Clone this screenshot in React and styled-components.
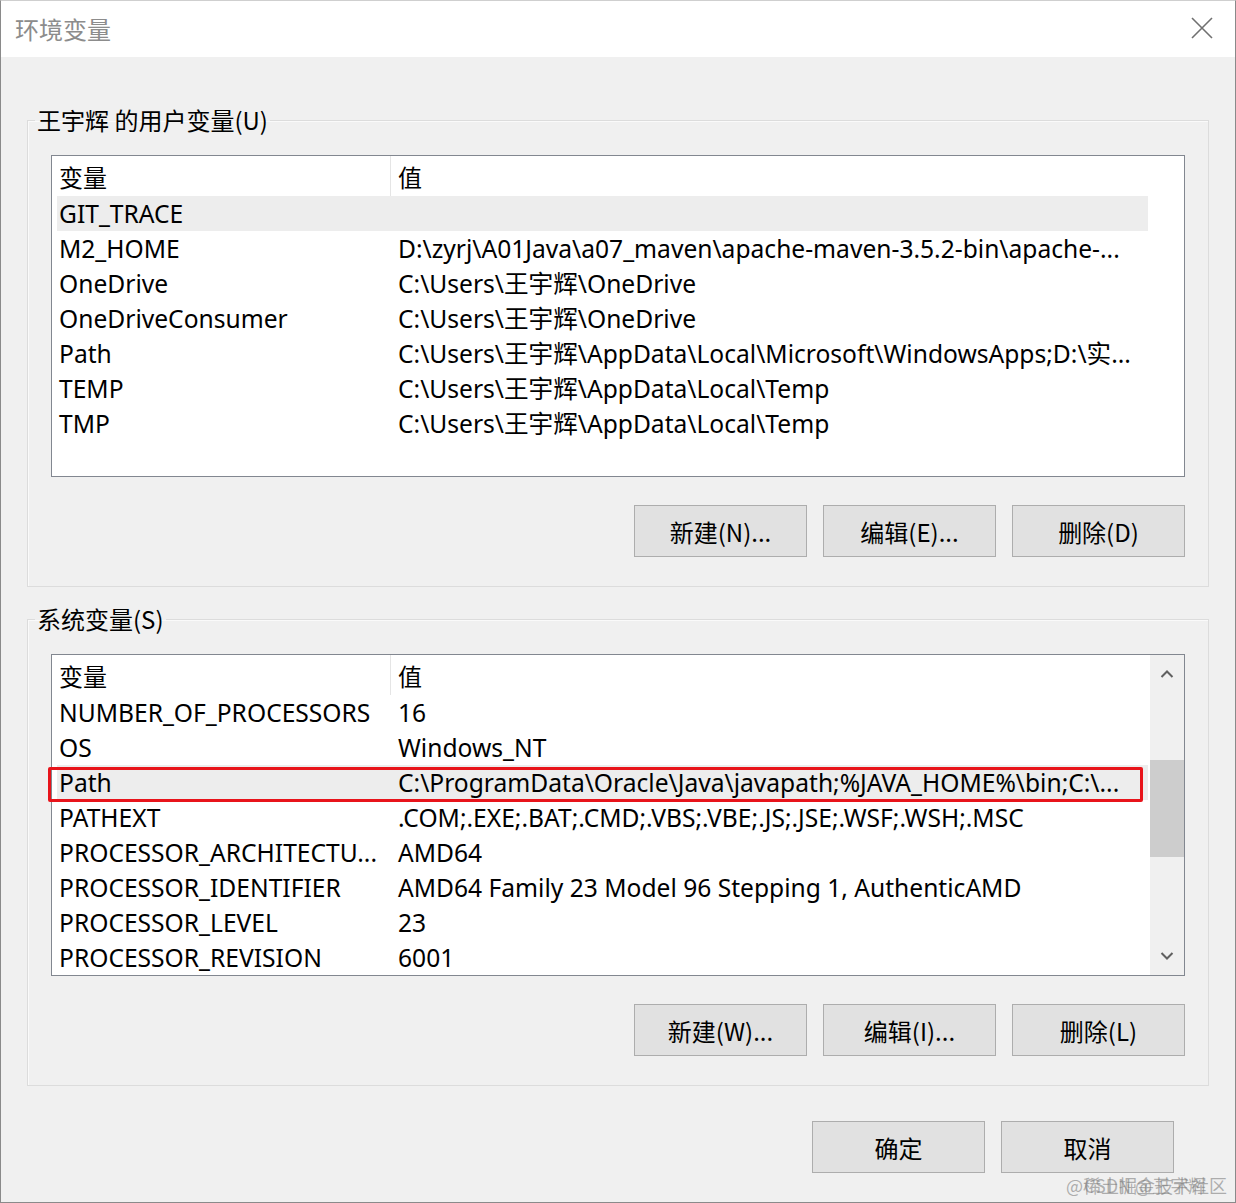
import React from 'react'
import styled, { createGlobalStyle, css } from 'styled-components'

const GlobalStyle = createGlobalStyle`
  html, body {
    margin: 0;
    padding: 0;
    background: #ffffff;
  }
  body {
    font-family: "Noto Sans", "Noto Sans CJK SC", sans-serif;
    color: #000;
  }
`

const userVars = [
  ['GIT_TRACE', '', true],
  ['M2_HOME', 'D:\\zyrj\\A01Java\\a07_maven\\apache-maven-3.5.2-bin\\apache-...'],
  ['OneDrive', 'C:\\Users\\王宇辉\\OneDrive'],
  ['OneDriveConsumer', 'C:\\Users\\王宇辉\\OneDrive'],
  ['Path', 'C:\\Users\\王宇辉\\AppData\\Local\\Microsoft\\WindowsApps;D:\\实...'],
  ['TEMP', 'C:\\Users\\王宇辉\\AppData\\Local\\Temp'],
  ['TMP', 'C:\\Users\\王宇辉\\AppData\\Local\\Temp'],
]

const sysVars = [
  ['NUMBER_OF_PROCESSORS', '16'],
  ['OS', 'Windows_NT'],
  ['Path', 'C:\\ProgramData\\Oracle\\Java\\javapath;%JAVA_HOME%\\bin;C:\\...', true, true],
  ['PATHEXT', '.COM;.EXE;.BAT;.CMD;.VBS;.VBE;.JS;.JSE;.WSF;.WSH;.MSC'],
  ['PROCESSOR_ARCHITECTU...', 'AMD64'],
  ['PROCESSOR_IDENTIFIER', 'AMD64 Family 23 Model 96 Stepping 1, AuthenticAMD'],
  ['PROCESSOR_LEVEL', '23'],
  ['PROCESSOR_REVISION', '6001'],
]

function VarList({ rows, hasScrollbar }) {
  return (
    <ListBox>
      <ListBody>
        <HeaderRow>
          <NameCell $header>变量</NameCell>
          <ValueCell>值</ValueCell>
        </HeaderRow>
        {rows.map(([name, value, selected, marked]) => (
          <Row key={name} $selected={selected} $marked={marked}>
            <NameCell>{name}</NameCell>
            <ValueCell>{value}</ValueCell>
          </Row>
        ))}
      </ListBody>
      {hasScrollbar && (
        <Scrollbar>
          <ArrowBtn>
            <svg width="14" height="10" viewBox="0 0 14 10">
              <path d="M1.5 8 L7 2.5 L12.5 8" fill="none" stroke="#606060" strokeWidth="2" />
            </svg>
          </ArrowBtn>
          <Track>
            <Thumb />
          </Track>
          <ArrowBtn>
            <svg width="14" height="10" viewBox="0 0 14 10">
              <path d="M1.5 2 L7 7.5 L12.5 2" fill="none" stroke="#606060" strokeWidth="2" />
            </svg>
          </ArrowBtn>
        </Scrollbar>
      )}
    </ListBox>
  )
}

export default function App() {
  return (
    <Window>
      <GlobalStyle />
      <TitleBar>
        <Title>环境变量</Title>
        <CloseBtn aria-label='close'>
          <svg width="22" height="22" viewBox="0 0 22 22">
            <path d="M1 1 L21 21 M21 1 L1 21" stroke="#707070" strokeWidth="1.6" />
          </svg>
        </CloseBtn>
      </TitleBar>
      <Body>
        <Group $first>
          <Legend>王宇辉 的用户变量(U)</Legend>
          <GroupInner>
            <VarList rows={userVars} />
            <ButtonRow>
              <Button>新建(N)...</Button>
              <Button>编辑(E)...</Button>
              <Button>删除(D)</Button>
            </ButtonRow>
          </GroupInner>
        </Group>
        <Group>
          <Legend>系统变量(S)</Legend>
          <GroupInner>
            <VarList rows={sysVars} hasScrollbar />
            <ButtonRow>
              <Button>新建(W)...</Button>
              <Button>编辑(I)...</Button>
              <Button>删除(L)</Button>
            </ButtonRow>
          </GroupInner>
        </Group>
        <Footer>
          <Button>确定</Button>
          <Button>取消</Button>
        </Footer>
      </Body>
      <Watermark>
        <span>@稀土掘金技术社区</span>
        <span className='over'>CSDN @王宇辉</span>
      </Watermark>
    </Window>
  )
}

const Window = styled.div`
  position: relative;
  box-sizing: border-box;
  width: 1236px;
  height: 1203px;
  border: 1px solid #8a8a8a;
  border-top-color: #cfcfcf;
  background: #f0f0f0;
  display: flex;
  flex-direction: column;
  overflow: hidden;
`

const TitleBar = styled.div`
  height: 56px;
  background: #ffffff;
  display: flex;
  align-items: center;
  justify-content: space-between;
  padding: 0 22px 0 14px;
`

const Title = styled.div`
  font-size: 24px;
  color: #8c8c8c;
  font-family: "Noto Sans CJK SC", sans-serif;
  padding-bottom: 2px;
`

const CloseBtn = styled.div`
  width: 22px;
  height: 22px;
  display: flex;
  margin-bottom: 2px;
`

const Body = styled.div`
  flex: 1;
  padding: 0 26px 0 26px;
  display: flex;
  flex-direction: column;
`

const Group = styled.fieldset`
  margin: 16px 0 0 0;
  ${(p) => p.$first && css`margin-top: 47px;`}
  padding: 0;
  border: 1px solid #dcdcdc;
  box-shadow: inset 1px 1px 0 #fafafa;
  min-width: 0;
`

const Legend = styled.legend`
  margin-left: 7px;
  padding: 0 2px;
  font-size: 24px;
  line-height: 32px;
  font-family: "Noto Sans CJK SC", sans-serif;
  color: #000;
`

const GroupInner = styled.div`
  padding: 19px 23px 29px 23px;
  display: flex;
  flex-direction: column;
`

const ListBox = styled.div`
  box-sizing: border-box;
  height: 322px;
  border: 1px solid #828790;
  background: #ffffff;
  display: flex;
  position: relative;
`

const ListBody = styled.div`
  flex: 1;
  padding-left: 5px;
  min-width: 0;
`

const rowBase = css`
  width: 1091px;
  display: flex;
  align-items: center;
  white-space: nowrap;
`

const HeaderRow = styled.div`
  ${rowBase}
  height: 40px;
  font-size: 24px;
  font-family: "Noto Sans CJK SC", sans-serif;
`

const Row = styled.div`
  ${rowBase}
  height: 35px;
  font-size: 24.6px;
  line-height: 33px;
  position: relative;
  ${(p) => p.$selected && css`background: #ededed;`}
  ${(p) => p.$marked && css`
    &::after {
      content: '';
      position: absolute;
      left: -9px;
      right: 5px;
      top: 2px;
      bottom: -2px;
      border: 3px solid #e8141b;
      border-radius: 2px;
    }
  `}
`

const NameCell = styled.div`
  box-sizing: border-box;
  width: 334px;
  flex: none;
  padding-left: 2px;
  height: 100%;
  display: flex;
  align-items: center;
  overflow: hidden;
  ${(p) => p.$header && css`border-right: 1px solid #e5e5e5;`}
`

const ValueCell = styled.div`
  flex: 1;
  padding-left: 7px;
  overflow: hidden;
  text-overflow: ellipsis;
`

const Scrollbar = styled.div`
  width: 34px;
  flex: none;
  background: #f0f0f0;
  display: flex;
  flex-direction: column;
`

const ArrowBtn = styled.div`
  height: 38px;
  display: flex;
  align-items: center;
  justify-content: center;
`

const Track = styled.div`
  flex: 1;
  padding-top: 67px;
`

const Thumb = styled.div`
  height: 97px;
  background: #cdcdcd;
`

const ButtonRow = styled.div`
  display: flex;
  justify-content: flex-end;
  gap: 16px;
  margin-top: 28px;
`

const Button = styled.div`
  box-sizing: border-box;
  width: 173px;
  height: 52px;
  background: #e1e1e1;
  border: 1px solid #adadad;
  display: flex;
  align-items: center;
  justify-content: center;
  font-size: 24px;
  font-family: "Noto Sans CJK SC", sans-serif;
  color: #000;
`

const Footer = styled.div`
  display: flex;
  justify-content: flex-end;
  gap: 16px;
  margin-top: 35px;
  padding-right: 35px;
`

const Watermark = styled.div`
  position: absolute;
  right: 8px;
  bottom: 4px;
  font-size: 18px;
  font-family: "Noto Sans CJK SC", sans-serif;
  color: rgba(150, 150, 150, 0.75);
  span.over {
    position: absolute;
    left: 18px;
    top: 0;
    color: rgba(120, 120, 120, 0.55);
  }
`
